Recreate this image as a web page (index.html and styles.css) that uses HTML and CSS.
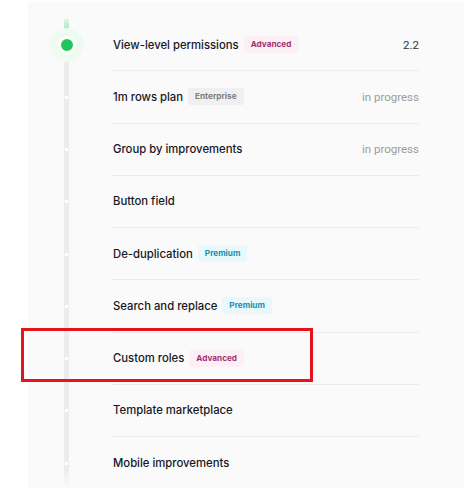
FILE: index.html
```html
<!DOCTYPE html>
<html lang="en">
<head>
    <meta charset="UTF-8">
    <meta name="viewport" content="width=device-width, initial-scale=1.0">
    <title>Roadmap</title>
    <link rel="stylesheet" href="styles.css">
</head>
<body>
    <div class="roadmap">
        <ul class="timeline">
            <li class="item first">
                <div class="rail"><span class="dot"></span></div>
                <div class="content">
                    <span class="title">View-level permissions</span>
                    <span class="badge advanced">Advanced</span>
                    <span class="status version">2.2</span>
                </div>
            </li>
            <li class="item">
                <div class="rail"><span class="pip"></span></div>
                <div class="content">
                    <span class="title">1m rows plan</span>
                    <span class="badge enterprise">Enterprise</span>
                    <span class="status">in progress</span>
                </div>
            </li>
            <li class="item">
                <div class="rail"><span class="pip"></span></div>
                <div class="content">
                    <span class="title">Group by improvements</span>
                    <span class="status">in progress</span>
                </div>
            </li>
            <li class="item">
                <div class="rail"><span class="pip"></span></div>
                <div class="content">
                    <span class="title">Button field</span>
                </div>
            </li>
            <li class="item">
                <div class="rail"><span class="pip"></span></div>
                <div class="content">
                    <span class="title">De-duplication</span>
                    <span class="badge premium">Premium</span>
                </div>
            </li>
            <li class="item">
                <div class="rail"><span class="pip"></span></div>
                <div class="content">
                    <span class="title">Search and replace</span>
                    <span class="badge premium">Premium</span>
                </div>
            </li>
            <li class="item">
                <div class="rail"><span class="pip"></span></div>
                <div class="content">
                    <span class="title">Custom roles</span>
                    <span class="badge advanced">Advanced</span>
                </div>
            </li>
            <li class="item">
                <div class="rail"><span class="pip"></span></div>
                <div class="content">
                    <span class="title">Template marketplace</span>
                </div>
            </li>
            <li class="item last">
                <div class="rail"><span class="pip"></span></div>
                <div class="content">
                    <span class="title">Mobile improvements</span>
                </div>
            </li>
        </ul>
        <!-- highlight box around one entry -->
        <div class="highlight"></div>
    </div>
</body>
</html>
```

FILE: styles.css
```css
body {
    margin: 0;
    background: #fff;
    font-family: Inter, "Noto Sans", sans-serif;
}

.roadmap {
    position: relative;
    margin: 2px 0 0 28px;
    width: 436px;
    height: 486px;
    background: #fafafa;
    padding: 17px 45px 0 0;
    box-sizing: border-box;
}

.timeline {
    list-style: none;
    margin: 0;
    padding: 0;
}

.item {
    display: flex;
    height: 52.25px;
}

.rail {
    width: 5px;
    margin: 0 43px 0 36px;
    background: #ececec;
    display: flex;
    align-items: center;
    justify-content: center;
}

.first .rail {
    background: linear-gradient(to bottom, rgba(120, 220, 150, 0.2) 0, #8fe2a8 16px, #ececec 17px);
}

.last .rail {
    background: linear-gradient(to bottom, #ececec 60%, rgba(236, 236, 236, 0));
}

.pip {
    width: 3px;
    height: 3px;
    background: #fff;
}

.dot {
    flex: none;
    width: 12px;
    height: 12px;
    border-radius: 50%;
    background: #1fc65a;
    border: 3px solid #fff;
    box-shadow: 0 0 0 8px #edfbf1;
}

.content {
    flex: 1;
    display: flex;
    align-items: center;
    border-bottom: 1px solid #ececec;
    padding-left: 1px;
}

.last .content {
    border-bottom: none;
}

.title {
    font-size: 11.3px;
    font-weight: 500;
    color: #17171f;
}

.badge {
    margin-left: 5px;
    padding: 0 7px;
    height: 17px;
    line-height: 17px;
    border-radius: 3px;
    font-size: 8.2px;
    font-weight: 700;
}

.advanced {
    background: #fdeff6;
    color: #a2346f;
}

.enterprise {
    background: #f0f0f0;
    color: #7d7d7d;
}

.premium {
    background: #e8f8fc;
    color: #1b8fae;
}

.status {
    margin-left: auto;
    font-family: Roboto, sans-serif;
    font-size: 11.5px;
    color: #9c9c9c;
}

.status.version {
    color: #333;
}

.highlight {
    position: absolute;
    left: -7px;
    top: 326px;
    width: 292px;
    height: 54px;
    border: 3px solid #e3141b;
    box-sizing: border-box;
}
```
